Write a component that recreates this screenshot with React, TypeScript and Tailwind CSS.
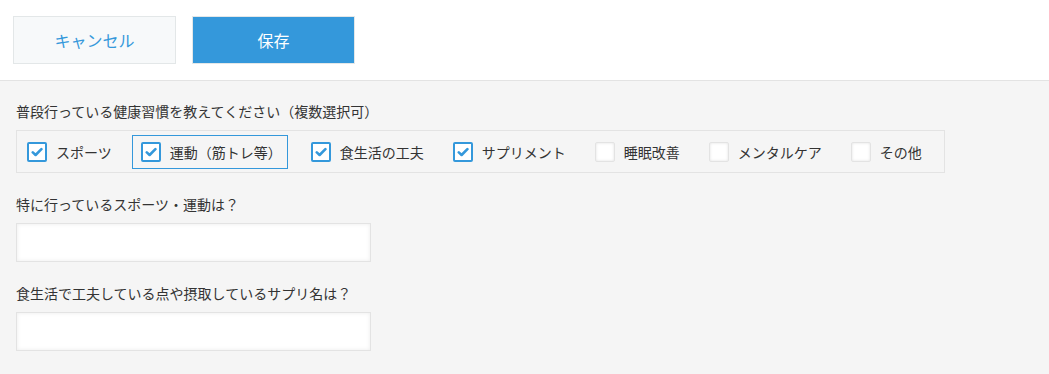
const font = { fontFamily: '"Noto Sans CJK JP", "Noto Sans", sans-serif' }

interface Option {
  label: string
  checked: boolean
  focused?: boolean
}

const options: Option[] = [
  { label: 'スポーツ', checked: true },
  { label: '運動（筋トレ等）', checked: true, focused: true },
  { label: '食生活の工夫', checked: true },
  { label: 'サプリメント', checked: true },
  { label: '睡眠改善', checked: false },
  { label: 'メンタルケア', checked: false },
  { label: 'その他', checked: false },
]

function CheckBox({ checked }: { checked: boolean }) {
  if (checked) {
    return (
      <span className="flex h-[20px] w-[20px] shrink-0 items-center justify-center rounded-[2px] border-2 border-[#3498db] bg-white">
        <svg width="12" height="10" viewBox="0 0 12 10">
          <path d="M1.8 5.4 L4.6 8 L10.4 2.2" fill="none" stroke="#3498db" strokeWidth="2.6" strokeLinecap="round" strokeLinejoin="round" />
        </svg>
      </span>
    )
  }
  return (
    <span className="block h-[20px] w-[20px] shrink-0 rounded-[2px] border border-[#e3e3e3] bg-white shadow-[inset_0_0_3px_rgba(0,0,0,0.12)]" />
  )
}

function Field({ label, children }: { label: string; children: React.ReactNode }) {
  return (
    <div className="mb-[21px]">
      <div className="mb-[9px] text-[14px] leading-[20px] text-[#333]">{label}</div>
      {children}
    </div>
  )
}

function TextInput() {
  return (
    <div className="h-[39px] w-[355px] border border-[#e3e3e3] bg-white shadow-[inset_0_0_4px_rgba(0,0,0,0.08)]" />
  )
}

export default function App() {
  return (
    <div className="min-h-screen bg-[#f5f5f5]" style={font}>
      {/* Header actions */}
      <div className="flex gap-[16px] border-b border-[#e3e3e3] bg-white px-[13px] py-[16px]">
        <button className="h-[48px] w-[163px] border border-[#e3e7e8] bg-[#f7f9fa] text-[16px] text-[#3498db]">
          キャンセル
        </button>
        <button className="h-[48px] w-[163px] border border-[#e3e7e8] bg-[#3498db] text-[16px] text-white">
          保存
        </button>
      </div>

      {/* Form */}
      <div className="px-[16px] pt-[20px]">
        <Field label="普段行っている健康習慣を教えてください（複数選択可）">
          <div className="flex w-[929px] items-center border border-[#e3e3e3] pb-[3px] pl-[1px] pt-[4px]">
            {options.map((o) => (
              <div
                key={o.label}
                className={`mr-[14px] flex h-[34px] shrink-0 items-center whitespace-nowrap border pl-[8px] pr-[5px] ${o.focused ? 'border-[#3498db]' : 'border-transparent'}`}
              >
                <CheckBox checked={o.checked} />
                <span className="ml-[9px] text-[14px] leading-[20px] text-[#333]">{o.label}</span>
              </div>
            ))}
          </div>
        </Field>
        <Field label="特に行っているスポーツ・運動は？">
          <TextInput />
        </Field>
        <Field label="食生活で工夫している点や摂取しているサプリ名は？">
          <TextInput />
        </Field>
      </div>
    </div>
  )
}
